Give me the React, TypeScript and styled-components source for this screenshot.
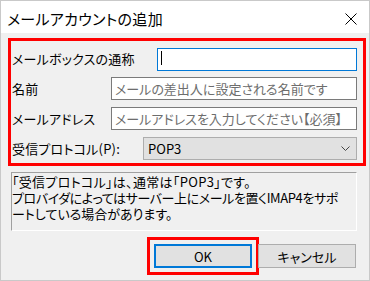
import React from 'react';
import styled, { createGlobalStyle } from 'styled-components';

const GlobalStyle = createGlobalStyle`
  html, body {
    margin: 0;
    padding: 0;
    background: #ffffff;
  }
  body {
    font-family: "Noto Sans CJK JP", "Noto Sans", "Liberation Sans", sans-serif;
    color: #000;
  }
`;

const Window = styled.div`
  width: 370px;
  height: 281px;
  box-sizing: border-box;
  border: 1px solid #c9c9c9;
  background: #f0f0f0;
  display: flex;
  flex-direction: column;
`;

const TitleBar = styled.div`
  height: 32px;
  flex-shrink: 0;
  background: #ffffff;
  display: flex;
  align-items: center;
  justify-content: space-between;
  padding: 3px 12px 0 6px;
  box-sizing: border-box;
`;

const Title = styled.span`
  font-size: 15px;
  font-feature-settings: "palt";
  letter-spacing: 0.3px;
`;

const Body = styled.div`
  padding: 5px 0 0 7px;
  display: flex;
  flex-direction: column;
`;

const FormGroup = styled.div`
  width: 358px;
  box-sizing: border-box;
  border: 3px solid #ff0000;
  padding: 6px 6px 3px 1px;
  display: grid;
  gap: 7px;
`;

const Row = styled.div`
  height: 23px;
  display: flex;
  align-items: center;
  justify-content: space-between;
`;

const Label = styled.span`
  font-size: 13px;
  font-feature-settings: "palt";
  letter-spacing: 0.2px;
  white-space: nowrap;
`;

const Field = styled.div`
  position: relative;
`;

const TextInput = styled.input<{ $w: number; $focused?: boolean }>`
  width: ${(p) => p.$w}px;
  height: 23px;
  box-sizing: border-box;
  margin: 0;
  padding: 0 3px;
  border: 1px solid ${(p) => (p.$focused ? '#0078d7' : '#7a7a7a')};
  background: #ffffff;
  font-family: inherit;
  font-size: 13px;
  font-feature-settings: "palt";
  outline: none;
  &::placeholder {
    color: #6d6d6d;
    opacity: 1;
  }
`;

const Caret = styled.span`
  position: absolute;
  left: 4px;
  top: 5px;
  width: 1px;
  height: 14px;
  background: #000;
`;

const Combo = styled.div`
  width: 214px;
  height: 23px;
  box-sizing: border-box;
  border: 1px solid #adadad;
  background: #e1e1e1;
  display: flex;
  align-items: center;
  justify-content: space-between;
  padding: 0 6px 0 4px;
  font-size: 13px;
`;

const Description = styled.div`
  margin: 6px 0 0 3px;
  width: 346px;
  height: 59px;
  box-sizing: border-box;
  border-style: solid;
  border-width: 1px;
  border-color: #a0a0a0 #ffffff #ffffff #a0a0a0;
  padding: 1px 0 0 0;
  font-size: 13px;
  font-feature-settings: "palt";
  overflow: hidden;
`;

const Line = styled.div<{ $spacing?: number }>`
  height: 16px;
  line-height: 16px;
  white-space: nowrap;
  letter-spacing: ${(p) => p.$spacing ?? 0}px;
`;

const ButtonRow = styled.div`
  display: flex;
  justify-content: flex-end;
  gap: 6px;
  margin-top: 13px;
  padding-right: 13px;
`;

const Button = styled.button<{ $default?: boolean }>`
  width: 98px;
  height: 24px;
  box-sizing: border-box;
  margin: 0;
  padding: 0;
  background: #e1e1e1;
  border: ${(p) => (p.$default ? '2px solid #0078d7' : '1px solid #adadad')};
  outline: ${(p) => (p.$default ? '3px solid #ff0000' : 'none')};
  outline-offset: 4px;
  font-family: inherit;
  font-size: 13px;
  font-feature-settings: "palt";
  color: #000;
`;

const CloseIcon = () => (
  <svg width="12" height="12" viewBox="0 0 12 12">
    <path d="M0.5 0.5L11.5 11.5M11.5 0.5L0.5 11.5" stroke="#000" strokeWidth="1" />
  </svg>
);

const Chevron = () => (
  <svg width="9" height="5" viewBox="0 0 9 5">
    <path d="M0.5 0.5L4.5 4.5L8.5 0.5" stroke="#444" strokeWidth="1" fill="none" />
  </svg>
);

const App: React.FC = () => {
  return (
    <>
      <GlobalStyle />
      <Window>
        <TitleBar>
          <Title>メールアカウントの追加</Title>
          <CloseIcon />
        </TitleBar>
        <Body>
          <FormGroup>
            <Row>
              <Label>メールボックスの通称</Label>
              <Field>
                <TextInput $w={200} $focused readOnly />
                <Caret />
              </Field>
            </Row>
            <Row>
              <Label>名前</Label>
              <TextInput $w={246} placeholder="メールの差出人に設定される名前です" readOnly />
            </Row>
            <Row>
              <Label>メールアドレス</Label>
              <TextInput $w={246} placeholder="メールアドレスを入力してください【必須】" readOnly />
            </Row>
            <Row>
              <Label>受信プロトコル(P):</Label>
              <Combo>
                <span>POP3</span>
                <Chevron />
              </Combo>
            </Row>
          </FormGroup>
          <Description>
            <Line $spacing={0.3}>「受信プロトコル」は、通常は「POP3」です。</Line>
            <Line $spacing={-0.4}>プロバイダによってはサーバー上にメールを置くIMAP4をサポ</Line>
            <Line>ートしている場合があります。</Line>
          </Description>
          <ButtonRow>
            <Button $default>OK</Button>
            <Button>キャンセル</Button>
          </ButtonRow>
        </Body>
      </Window>
    </>
  );
};

export default App;
